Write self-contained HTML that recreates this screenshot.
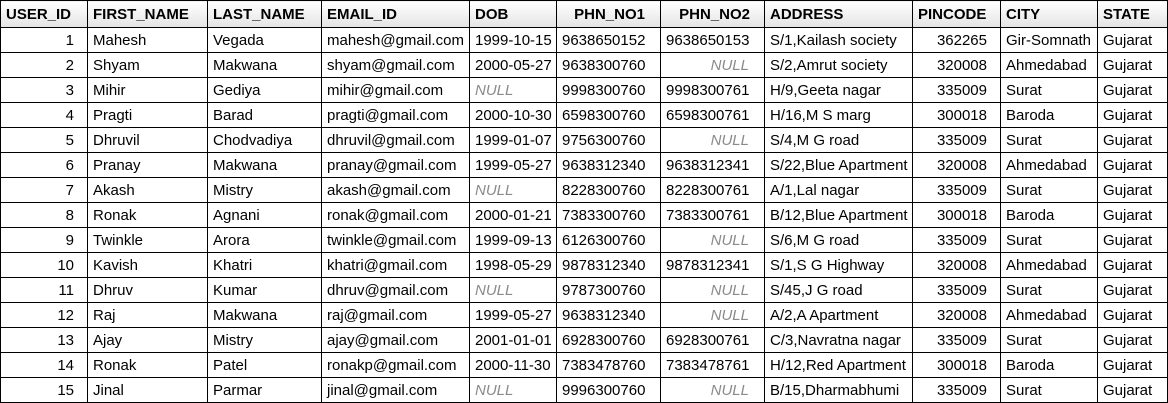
<!DOCTYPE html>
<html><head><meta charset="utf-8"><style>
html,body{margin:0;padding:0;background:#fff;}
table{border-collapse:collapse;table-layout:fixed;width:1167px;font-family:"Liberation Sans",Arial,sans-serif;font-size:15px;color:#000;position:absolute;left:0;top:0;}
td,th{border:1px solid #000;padding:1px 5px 0 5px;white-space:nowrap;overflow:hidden;height:23px;line-height:23px;}
th{height:24px;padding-top:2px;line-height:24px;text-align:left;font-weight:bold;background:linear-gradient(#fff,#e4e4e4);}
th.r{text-align:right;}
td.r{text-align:right;padding-right:13px;}
td.n.r{padding-right:15px;}
.n{color:#8a8a8a;font-style:italic;}
</style></head><body>
<table>
<colgroup><col style="width:87px"><col style="width:120px"><col style="width:114px"><col style="width:148px"><col style="width:87px"><col style="width:104px"><col style="width:104px"><col style="width:148px"><col style="width:88px"><col style="width:97px"><col style="width:70px"></colgroup>
<tr><th>USER_ID</th><th>FIRST_NAME</th><th>LAST_NAME</th><th>EMAIL_ID</th><th>DOB</th><th class="r" style="padding-right:15px">PHN_NO1</th><th class="r" style="padding-right:14px">PHN_NO2</th><th>ADDRESS</th><th>PINCODE</th><th>CITY</th><th>STATE</th></tr>
<tr><td class="r">1</td><td>Mahesh</td><td>Vegada</td><td>mahesh@gmail.com</td><td>1999-10-15</td><td>9638650152</td><td>9638650153</td><td>S/1,Kailash society</td><td class="r">362265</td><td>Gir-Somnath</td><td>Gujarat</td></tr>
<tr><td class="r">2</td><td>Shyam</td><td>Makwana</td><td>shyam@gmail.com</td><td>2000-05-27</td><td>9638300760</td><td class="r n">NULL</td><td>S/2,Amrut society</td><td class="r">320008</td><td>Ahmedabad</td><td>Gujarat</td></tr>
<tr><td class="r">3</td><td>Mihir</td><td>Gediya</td><td>mihir@gmail.com</td><td class="n">NULL</td><td>9998300760</td><td>9998300761</td><td>H/9,Geeta nagar</td><td class="r">335009</td><td>Surat</td><td>Gujarat</td></tr>
<tr><td class="r">4</td><td>Pragti</td><td>Barad</td><td>pragti@gmail.com</td><td>2000-10-30</td><td>6598300760</td><td>6598300761</td><td>H/16,M S marg</td><td class="r">300018</td><td>Baroda</td><td>Gujarat</td></tr>
<tr><td class="r">5</td><td>Dhruvil</td><td>Chodvadiya</td><td>dhruvil@gmail.com</td><td>1999-01-07</td><td>9756300760</td><td class="r n">NULL</td><td>S/4,M G road</td><td class="r">335009</td><td>Surat</td><td>Gujarat</td></tr>
<tr><td class="r">6</td><td>Pranay</td><td>Makwana</td><td>pranay@gmail.com</td><td>1999-05-27</td><td>9638312340</td><td>9638312341</td><td>S/22,Blue Apartment</td><td class="r">320008</td><td>Ahmedabad</td><td>Gujarat</td></tr>
<tr><td class="r">7</td><td>Akash</td><td>Mistry</td><td>akash@gmail.com</td><td class="n">NULL</td><td>8228300760</td><td>8228300761</td><td>A/1,Lal nagar</td><td class="r">335009</td><td>Surat</td><td>Gujarat</td></tr>
<tr><td class="r">8</td><td>Ronak</td><td>Agnani</td><td>ronak@gmail.com</td><td>2000-01-21</td><td>7383300760</td><td>7383300761</td><td>B/12,Blue Apartment</td><td class="r">300018</td><td>Baroda</td><td>Gujarat</td></tr>
<tr><td class="r">9</td><td>Twinkle</td><td>Arora</td><td>twinkle@gmail.com</td><td>1999-09-13</td><td>6126300760</td><td class="r n">NULL</td><td>S/6,M G road</td><td class="r">335009</td><td>Surat</td><td>Gujarat</td></tr>
<tr><td class="r">10</td><td>Kavish</td><td>Khatri</td><td>khatri@gmail.com</td><td>1998-05-29</td><td>9878312340</td><td>9878312341</td><td>S/1,S G Highway</td><td class="r">320008</td><td>Ahmedabad</td><td>Gujarat</td></tr>
<tr><td class="r">11</td><td>Dhruv</td><td>Kumar</td><td>dhruv@gmail.com</td><td class="n">NULL</td><td>9787300760</td><td class="r n">NULL</td><td>S/45,J G road</td><td class="r">335009</td><td>Surat</td><td>Gujarat</td></tr>
<tr><td class="r">12</td><td>Raj</td><td>Makwana</td><td>raj@gmail.com</td><td>1999-05-27</td><td>9638312340</td><td class="r n">NULL</td><td>A/2,A Apartment</td><td class="r">320008</td><td>Ahmedabad</td><td>Gujarat</td></tr>
<tr><td class="r">13</td><td>Ajay</td><td>Mistry</td><td>ajay@gmail.com</td><td>2001-01-01</td><td>6928300760</td><td>6928300761</td><td>C/3,Navratna nagar</td><td class="r">335009</td><td>Surat</td><td>Gujarat</td></tr>
<tr><td class="r">14</td><td>Ronak</td><td>Patel</td><td>ronakp@gmail.com</td><td>2000-11-30</td><td>7383478760</td><td>7383478761</td><td>H/12,Red Apartment</td><td class="r">300018</td><td>Baroda</td><td>Gujarat</td></tr>
<tr><td class="r">15</td><td>Jinal</td><td>Parmar</td><td>jinal@gmail.com</td><td class="n">NULL</td><td>9996300760</td><td class="r n">NULL</td><td>B/15,Dharmabhumi</td><td class="r">335009</td><td>Surat</td><td>Gujarat</td></tr>
</table>
</body></html>
